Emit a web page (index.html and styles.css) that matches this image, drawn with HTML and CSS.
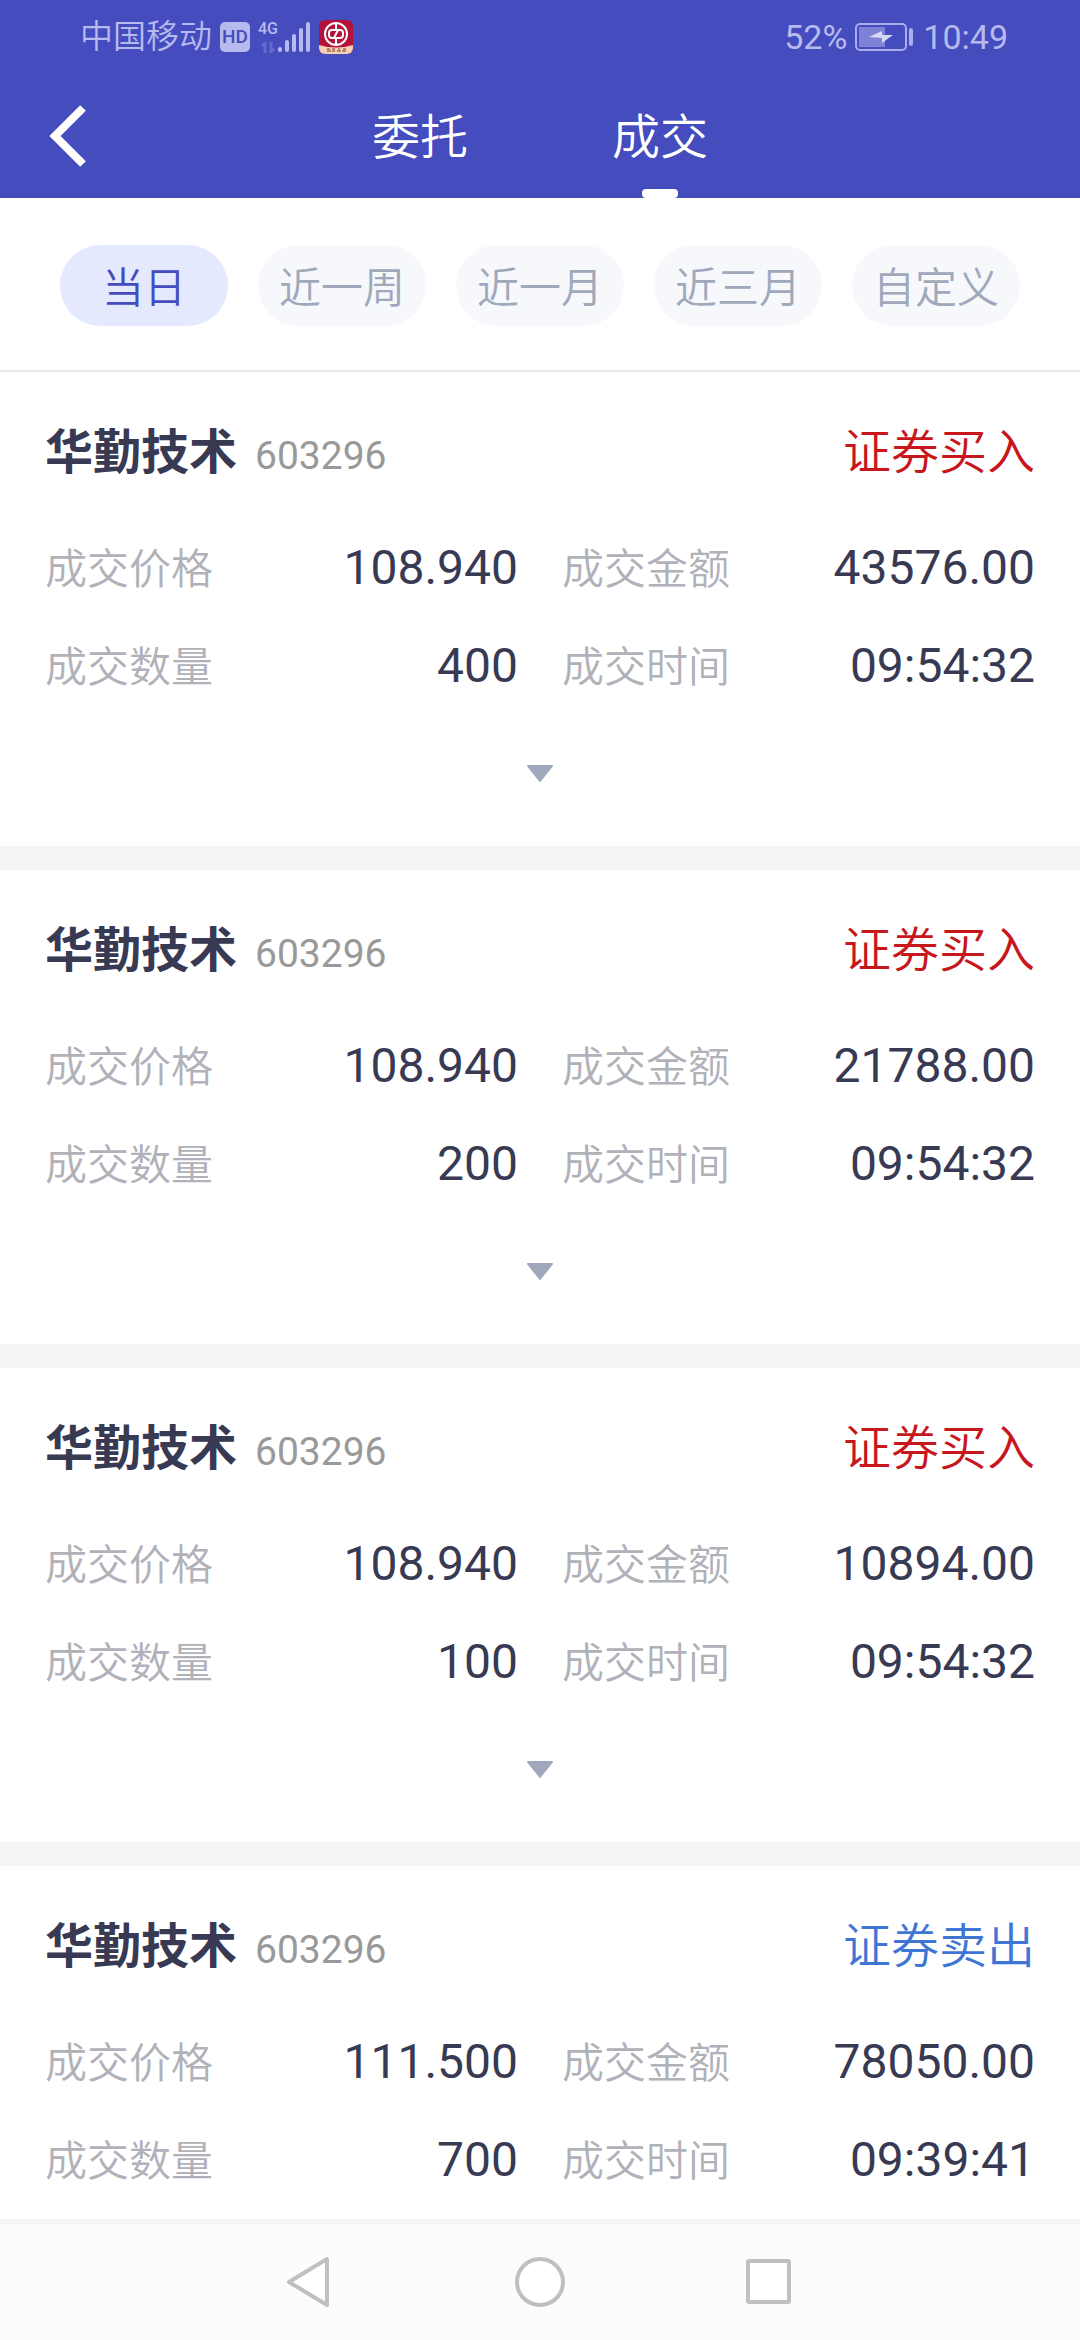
FILE: index.html
```
<!DOCTYPE html>
<html lang="zh-CN">
<head>
    <meta charset="UTF-8">
    <meta name="viewport" content="width=device-width, initial-scale=1.0">
    <title>成交</title>
    <link rel="stylesheet" href="styles.css">
</head>
<body>
    <div class="app">
        <header class="header">
            <!-- 状态栏 -->
            <div class="status">
                <div class="status-left">
                    <span class="carrier">中国移动</span>
                    <span class="hd">HD</span>
                    <div class="signal">
                        <div class="net">
                            <span class="net-type">4G</span>
                            <svg width="14" height="11" viewBox="0 0 14 11" fill="none" stroke="#6469cc" stroke-width="3"><path d="M1 4l3-3v10M13 7l-3 3V0"/></svg>
                        </div>
                        <svg width="33" height="32" viewBox="0 0 33 32" fill="#b7baee">
                            <rect x="0" y="26" width="4" height="5" rx="2"/>
                            <rect x="7" y="19" width="4" height="12" rx="2"/>
                            <rect x="14" y="13" width="4" height="18" rx="2"/>
                            <rect x="21" y="7" width="4" height="24" rx="2"/>
                            <rect x="28" y="1" width="4" height="30" rx="2"/>
                        </svg>
                    </div>
                    <svg class="bank" width="34" height="34" viewBox="0 0 34 34">
                        <clipPath id="bankClip"><rect width="34" height="34" rx="6"/></clipPath>
                        <g clip-path="url(#bankClip)">
                            <rect width="34" height="34" fill="#b5123a"/>
                            <path d="M0 25q17 5 34 0v9H0z" fill="#f3cfb4"/>
                            <g fill="none" stroke="#fff" stroke-width="2">
                                <circle cx="17" cy="14" r="11"/>
                                <path d="M17 3v7M17 18v7M20 10h-7q-3 0-3 3v2q0 3 3 3h2l4-8h2q3 0 3 3v2q0 3-3 3h-6"/>
                            </g>
                            <path d="M8 31h4m1 0h3m2 0h4m1 0h4M8 29h3m2 0h3m3 0h2m3 0h3" stroke="#7a3a2a" stroke-width="1" fill="none"/>
                        </g>
                    </svg>
                </div>
                <div class="status-right">
                    <span>52%</span>
                    <svg width="60" height="28" viewBox="0 0 60 28">
                        <rect x="1" y="1" width="50" height="26" rx="4" fill="none" stroke="#a9adeb" stroke-width="2"/>
                        <rect x="4" y="4" width="26" height="20" fill="#7d82d6"/>
                        <path d="M14 14l13-6v4h11l-11 8v-5z" fill="#d6d8f6"/>
                        <rect x="54" y="5" width="4" height="18" rx="2" fill="#a9adeb"/>
                    </svg>
                    <span>10:49</span>
                </div>
            </div>
            <nav class="navbar">
                <button class="back" aria-label="返回">
                    <svg width="38" height="64" viewBox="0 0 38 64" fill="none" stroke="#fff" stroke-width="8"><path d="M35 4L7 32l28 28"/></svg>
                </button>
                <div class="tabs">
                    <button class="tab">委托</button>
                    <button class="tab active">成交</button>
                </div>
            </nav>
        </header>

        <div class="filters">
            <button class="chip active">当日</button>
            <button class="chip">近一周</button>
            <button class="chip">近一月</button>
            <button class="chip">近三月</button>
            <button class="chip">自定义</button>
        </div>

        <!-- 成交列表 -->
        <main class="list">
            <section class="card">
                <div class="card-head">
                    <h2 class="name">华勤技术</h2>
                    <span class="code">603296</span>
                    <span class="side buy">证券买入</span>
                </div>
                <dl class="info">
                    <div class="item"><dt>成交价格</dt><dd>108.940</dd></div>
                    <div class="item"><dt>成交金额</dt><dd>43576.00</dd></div>
                    <div class="item"><dt>成交数量</dt><dd>400</dd></div>
                    <div class="item"><dt>成交时间</dt><dd>09:54:32</dd></div>
                </dl>
                <button class="more" aria-label="展开"><svg width="28" height="18" viewBox="0 0 28 18"><path d="M2 1h24L14 16z" fill="#a0a8bb" stroke="#a0a8bb" stroke-width="2" stroke-linejoin="round"/></svg></button>
            </section>

            <section class="card">
                <div class="card-head">
                    <h2 class="name">华勤技术</h2>
                    <span class="code">603296</span>
                    <span class="side buy">证券买入</span>
                </div>
                <dl class="info">
                    <div class="item"><dt>成交价格</dt><dd>108.940</dd></div>
                    <div class="item"><dt>成交金额</dt><dd>21788.00</dd></div>
                    <div class="item"><dt>成交数量</dt><dd>200</dd></div>
                    <div class="item"><dt>成交时间</dt><dd>09:54:32</dd></div>
                </dl>
                <button class="more" aria-label="展开"><svg width="28" height="18" viewBox="0 0 28 18"><path d="M2 1h24L14 16z" fill="#a0a8bb" stroke="#a0a8bb" stroke-width="2" stroke-linejoin="round"/></svg></button>
            </section>

            <section class="card">
                <div class="card-head">
                    <h2 class="name">华勤技术</h2>
                    <span class="code">603296</span>
                    <span class="side buy">证券买入</span>
                </div>
                <dl class="info">
                    <div class="item"><dt>成交价格</dt><dd>108.940</dd></div>
                    <div class="item"><dt>成交金额</dt><dd>10894.00</dd></div>
                    <div class="item"><dt>成交数量</dt><dd>100</dd></div>
                    <div class="item"><dt>成交时间</dt><dd>09:54:32</dd></div>
                </dl>
                <button class="more" aria-label="展开"><svg width="28" height="18" viewBox="0 0 28 18"><path d="M2 1h24L14 16z" fill="#a0a8bb" stroke="#a0a8bb" stroke-width="2" stroke-linejoin="round"/></svg></button>
            </section>

            <section class="card">
                <div class="card-head">
                    <h2 class="name">华勤技术</h2>
                    <span class="code">603296</span>
                    <span class="side sell">证券卖出</span>
                </div>
                <dl class="info">
                    <div class="item"><dt>成交价格</dt><dd>111.500</dd></div>
                    <div class="item"><dt>成交金额</dt><dd>78050.00</dd></div>
                    <div class="item"><dt>成交数量</dt><dd>700</dd></div>
                    <div class="item"><dt>成交时间</dt><dd>09:39:41</dd></div>
                </dl>
            </section>
        </main>

        <!-- 系统导航键 -->
        <footer class="sysnav">
            <button aria-label="返回"><svg width="52" height="52" viewBox="0 0 52 52"><path d="M42 3v46L4 26z"/></svg></button>
            <button aria-label="主屏幕"><svg width="52" height="52" viewBox="0 0 52 52"><circle cx="26" cy="26" r="23"/></svg></button>
            <button aria-label="最近任务"><svg width="52" height="52" viewBox="0 0 52 52"><rect x="5" y="5" width="41" height="41" rx="1"/></svg></button>
        </footer>
    </div>
</body>
</html>
```

FILE: styles.css
```
* {
    box-sizing: border-box;
}
body {
    margin: 0;
    font-family: Roboto, "Noto Sans CJK SC", sans-serif;
    background-color: #fff;
    color: #373a52;
}
button {
    padding: 0;
    border: none;
    background: none;
    font-family: inherit;
    cursor: pointer;
}
svg {
    display: block;
}
.app {
    display: flex;
    flex-direction: column;
    height: 100vh;
}

/* 顶部 */
.header {
    background-color: #444cbe;
    color: #fff;
}
.status {
    display: flex;
    justify-content: space-between;
    align-items: center;
    height: 74px;
    padding: 0 72px 0 80px;
    color: #b7baee;
    font-size: 34px;
    line-height: 40px;
}
.status-left, .status-right {
    display: flex;
    align-items: center;
    gap: 8px;
}
.carrier {
    font-size: 33px;
    font-weight: 350;
    line-height: 42px;
}
.hd {
    width: 30px;
    height: 30px;
    border-radius: 5px;
    background-color: #b7baee;
    color: #444cbe;
    font-size: 19px;
    font-weight: 500;
    line-height: 30px;
    text-align: center;
}
.signal {
    display: flex;
}
.net {
    display: flex;
    flex-direction: column;
    align-items: center;
    justify-content: space-between;
    width: 20px;
}
.net-type {
    font-size: 16px;
    font-weight: 500;
    line-height: 16px;
}
.navbar {
    display: flex;
    align-items: center;
    position: relative;
    height: 124px;
}
.back {
    position: absolute;
    left: 48px;
}
.tabs {
    display: flex;
    justify-content: center;
    flex: 1;
}
.tab {
    position: relative;
    width: 240px;
    height: 124px;
    padding-top: 4px;
    color: #fff;
    font-size: 48px;
    font-weight: 350;
    line-height: 60px;
}
.tab.active::after {
    content: "";
    position: absolute;
    left: 50%;
    bottom: 0;
    width: 36px;
    height: 9px;
    margin-left: -18px;
    border-radius: 4px;
    background-color: #fff;
}

/* 日期筛选 */
.filters {
    display: flex;
    gap: 30px;
    padding: 47px 60px 44px;
    border-bottom: 2px solid #e6e7ea;
}
.chip {
    flex: 1;
    height: 81px;
    padding-top: 6px;
    border-radius: 41px;
    background-color: #f6f8fc;
    color: #a0a8bb;
    font-size: 42px;
    font-weight: 350;
    line-height: 60px;
}
.chip.active {
    background-color: #e4e9fd;
    color: #444cbe;
}

/* 成交卡片 */
.list {
    flex: 1;
    overflow: hidden;
}
.card {
    height: 498px;
    padding: 46px 45px 0;
    border-bottom: 24px solid #f2f4f6;
}
.card-head {
    display: flex;
    align-items: baseline;
    line-height: 70px;
}
.name {
    margin: 0;
    font-size: 48px;
    font-weight: 700;
}
.code {
    margin-left: 18px;
    color: #999;
    font-size: 39px;
}
.side {
    margin-left: auto;
    font-size: 48px;
    font-weight: 350;
}
.buy {
    color: #c8161d;
}
.sell {
    color: #3f76d6;
}
.info {
    display: grid;
    grid-template-columns: 1fr 1fr;
    column-gap: 44px;
    margin: 28px 0 0;
}
.item {
    display: flex;
    justify-content: space-between;
    align-items: baseline;
    height: 98px;
    line-height: 98px;
}
dt {
    color: #b0b1b9;
    font-size: 42px;
    font-weight: 350;
}
dd {
    margin: 0;
    font-size: 48px;
}
.more {
    display: flex;
    justify-content: center;
    width: 100%;
    padding: 50px 0;
}

/* 系统导航栏 */
.sysnav {
    display: flex;
    justify-content: center;
    align-items: center;
    gap: 177px;
    height: 121px;
    border-top: 5px solid #f4f4f4;
    background-color: #fcfcfc;
}
.sysnav svg {
    fill: #fff;
    stroke: #c0c0c0;
    stroke-width: 4;
    stroke-linejoin: round;
}
```
